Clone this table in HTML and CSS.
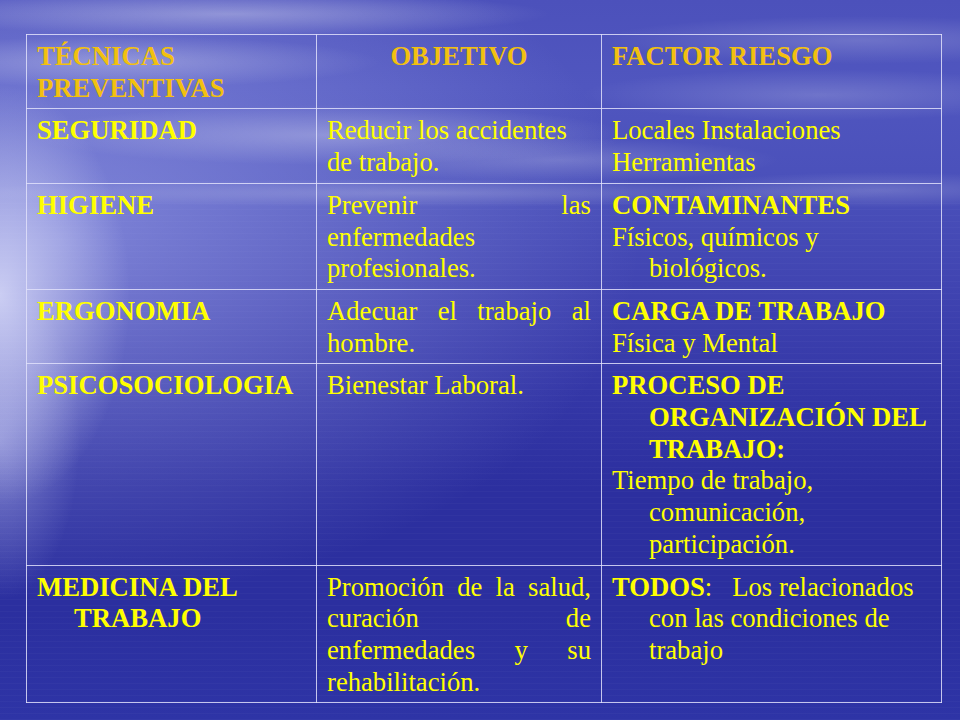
FILE: index.html
```html
<!DOCTYPE html>
<html lang="es">
<head>
<meta charset="utf-8">
<title>Técnicas preventivas</title>
<link rel="stylesheet" href="styles.css">
</head>
<body>
<div class="slide">
  <table class="grid">
    <colgroup>
      <col class="c1">
      <col class="c2">
      <col class="c3">
    </colgroup>
    <tr class="head">
      <td>TÉCNICAS PREVENTIVAS</td>
      <td class="center">OBJETIVO</td>
      <td>FACTOR RIESGO</td>
    </tr>
    <tr>
      <td class="name">SEGURIDAD</td>
      <td class="obj left">Reducir los accidentes de trabajo.</td>
      <td class="risk"><p>Locales Instalaciones</p><p>Herramientas</p></td>
    </tr>
    <tr>
      <td class="name">HIGIENE</td>
      <td class="obj">Prevenir las enfermedades profesionales.</td>
      <td class="risk"><p class="b">CONTAMINANTES</p><p>Físicos, químicos y biológicos.</p></td>
    </tr>
    <tr>
      <td class="name">ERGONOMIA</td>
      <td class="obj">Adecuar el trabajo al hombre.</td>
      <td class="risk"><p class="b">CARGA DE TRABAJO</p><p>Física y Mental</p></td>
    </tr>
    <tr>
      <td class="name">PSICOSOCIOLOGIA</td>
      <td class="obj">Bienestar Laboral.</td>
      <td class="risk"><p class="b">PROCESO DE ORGANIZACIÓN DEL TRABAJO:</p><p>Tiempo de trabajo, comunicación, participación.</p></td>
    </tr>
    <tr>
      <td class="name"><p>MEDICINA DEL TRABAJO</p></td>
      <td class="obj">Promoción de la salud, curación de enfermedades y su rehabilitación.</td>
      <td class="risk"><p><b>TODOS</b>:&nbsp;&nbsp; Los relacionados con las condiciones de trabajo</p></td>
    </tr>
  </table>
</div>
</body>
</html>
```
FILE: styles.css
```css
html, body {
  margin: 0;
  padding: 0;
}

body {
  width: 960px;
  height: 720px;
  overflow: hidden;
  background: #2c30a2;
}

.slide {
  width: 960px;
  height: 720px;
  box-sizing: border-box;
  padding: 34px 0 0 26px;
  font-family: "Liberation Serif", "Times New Roman", serif;
  font-size: 26.67px;
  line-height: 31.7px;
  color: #ffff00;
  background-image:
    radial-gradient(ellipse 130px 210px at 0px 295px, rgba(232, 234, 255, 0.75), rgba(232, 234, 255, 0) 100%),
    radial-gradient(ellipse 80px 160px at 0px 440px, rgba(215, 218, 255, 0.40), rgba(215, 218, 255, 0) 100%),
    radial-gradient(ellipse 320px 22px at 230px 14px, rgba(255, 255, 255, 0.32), rgba(255, 255, 255, 0) 100%),
    radial-gradient(ellipse 260px 26px at 120px 62px, rgba(255, 255, 255, 0.28), rgba(255, 255, 255, 0) 100%),
    radial-gradient(ellipse 300px 30px at 330px 135px, rgba(255, 255, 255, 0.28), rgba(255, 255, 255, 0) 100%),
    radial-gradient(ellipse 220px 22px at 560px 160px, rgba(255, 255, 255, 0.20), rgba(255, 255, 255, 0) 100%),
    radial-gradient(ellipse 260px 24px at 860px 40px, rgba(255, 255, 255, 0.18), rgba(255, 255, 255, 0) 100%),
    radial-gradient(ellipse 240px 26px at 820px 95px, rgba(255, 255, 255, 0.18), rgba(255, 255, 255, 0) 100%),
    radial-gradient(ellipse 200px 18px at 880px 190px, rgba(255, 255, 255, 0.18), rgba(255, 255, 255, 0) 100%),
    radial-gradient(ellipse 480px 14px at 420px 193px, rgba(255, 255, 255, 0.20), rgba(255, 255, 255, 0) 100%),
    radial-gradient(ellipse 580px 360px at 60px 240px, rgba(195, 200, 255, 0.45), rgba(195, 200, 255, 0) 100%),
    repeating-linear-gradient(0deg, rgba(255, 255, 255, 0.025) 0px, rgba(255, 255, 255, 0.025) 1px, rgba(255, 255, 255, 0) 1px, rgba(255, 255, 255, 0) 6px),
    linear-gradient(180deg, #4c51bb 0%, #5056bf 12%, #4a50ba 26%, #4044b1 40%, #3437a7 54%, #2c2f9f 68%, #2b2f9f 85%, #2e34a6 100%);
  background-size:
    960px 720px, 960px 720px, 960px 720px, 960px 720px, 960px 720px,
    960px 720px, 960px 720px, 960px 720px, 960px 720px, 960px 720px,
    960px 720px, 960px 520px, 960px 720px;
  background-position:
    0 0, 0 0, 0 0, 0 0, 0 0,
    0 0, 0 0, 0 0, 0 0, 0 0,
    0 0, 0 200px, 0 0;
  background-repeat: no-repeat;
}

.grid {
  border-collapse: collapse;
  table-layout: fixed;
  width: 915px;
}

.c1 { width: 290px; }
.c2 { width: 285px; }
.c3 { width: 340px; }

.grid td {
  border: 1px solid rgba(225, 225, 250, 0.85);
  padding: 6px 10px 4px 10px;
  vertical-align: top;
}

.grid p {
  margin: 0;
}

.head td {
  font-weight: bold;
  color: #f2c010;
}

.center {
  text-align: center;
}

.name {
  font-weight: bold;
}

.name p,
.risk p {
  padding-left: 37px;
  text-indent: -37px;
}

.obj {
  text-align: justify;
}

.obj.left {
  text-align: left;
}

.b {
  font-weight: bold;
}
```
